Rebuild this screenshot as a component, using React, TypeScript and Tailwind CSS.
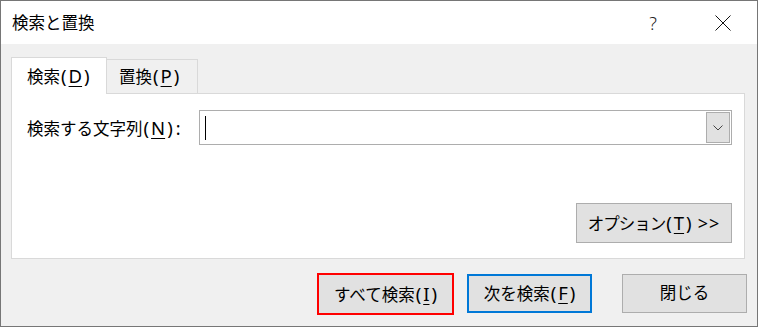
const font = { fontFamily: '"Noto Sans", "Noto Sans CJK JP", sans-serif' };

// access key in parentheses, e.g. (D), with the underline on the letter
function Acc({ k }: { k: string }) {
  return (
    <span className="text-[18.5px]">
      <span className="ml-px mr-[2px]">(</span>
      <span className="underline underline-offset-[3px] decoration-1">{k}</span>
      <span className="ml-[2px]">)</span>
    </span>
  );
}

export default function App() {
  return (
    <div
      className="w-[758px] h-[327px] border border-[#767676] flex flex-col text-black text-[16.5px] leading-none"
      style={font}
    >
      {/* Title bar */}
      <div className="h-[43px] bg-white flex items-center pl-[11px] pr-[11px]">
        <span className="flex-1 pt-[2px]">検索と置換</span>
        <div className="w-[46px] flex justify-center text-[18px] text-[#222] font-light">?</div>
        <div className="w-[46px] ml-[24px] flex justify-center">
          <svg width="16" height="16" viewBox="0 0 16 16">
            <path d="M0.5 0.5 L15.5 15.5 M15.5 0.5 L0.5 15.5" stroke="#111" strokeWidth="1" fill="none" />
          </svg>
        </div>
      </div>

      {/* Body */}
      <div className="flex-1 bg-[#f0f0f0] px-[10px] pt-[13px] flex flex-col">
        {/* Tabs */}
        <div className="flex items-end h-[36px]">
          <div className="relative z-10 h-[37px] -mb-px w-[96px] bg-white border border-b-0 border-[#d9d9d9] flex items-center pl-[15px]">
            <span>検索<Acc k="D" /></span>
          </div>
          <div className="h-[34px] w-[91px] bg-[#f0f0f0] border-t border-r border-[#d9d9d9] flex items-center pl-[12px]">
            <span>置換<Acc k="P" /></span>
          </div>
        </div>

        {/* Panel */}
        <div className="h-[166px] mr-[2px] bg-white border border-[#d9d9d9] flex flex-col pt-[16px] pl-[15px] pr-[12px]">
          <div className="flex items-center h-[35px]">
            <span className="w-[172px] pt-[1px]">
              検索する文字列<Acc k="N" /><span className="ml-[3px] text-[18px]">:</span>
            </span>
            <div className="flex-1 h-[35px] border border-[#adadad] bg-white flex items-center p-px">
              <div className="w-px h-[24px] bg-black ml-[4px]" />
              <div className="flex-1" />
              <div className="w-[24px] h-full bg-[#e1e1e1] border border-[#adadad] flex items-center justify-center">
                <svg width="10" height="6" viewBox="0 0 10 6">
                  <path d="M0.5 0.5 L5 5 L9.5 0.5" stroke="#444" strokeWidth="1" fill="none" />
                </svg>
              </div>
            </div>
          </div>
          <div className="flex justify-end mt-[58px]">
            <button className="w-[156px] h-[40px] bg-[#e1e1e1] border border-[#adadad] flex items-center justify-center">
              <span>
                <span className="tracking-[-1px]">オプション</span><Acc k="T" />
                <span className="ml-[6px] text-[18px] tracking-[1px]">&gt;&gt;</span>
              </span>
            </button>
          </div>
        </div>

        {/* Bottom buttons */}
        <div className="flex justify-end items-start mt-[14px]">
          <button className="w-[137px] h-[42px] bg-[#e1e1e1] border-2 border-[#ff0000] flex items-center justify-center">
            <span>すべて検索<Acc k="I" /></span>
          </button>
          <button className="w-[125px] h-[39px] mt-px ml-[13px] bg-[#e1e1e1] border-2 border-[#0078d7] flex items-center justify-center">
            <span>次を検索<Acc k="F" /></span>
          </button>
          <button className="w-[125px] h-[39px] mt-px ml-[30px] bg-[#e1e1e1] border border-[#adadad] flex items-center justify-center">
            閉じる
          </button>
        </div>
      </div>
    </div>
  );
}
